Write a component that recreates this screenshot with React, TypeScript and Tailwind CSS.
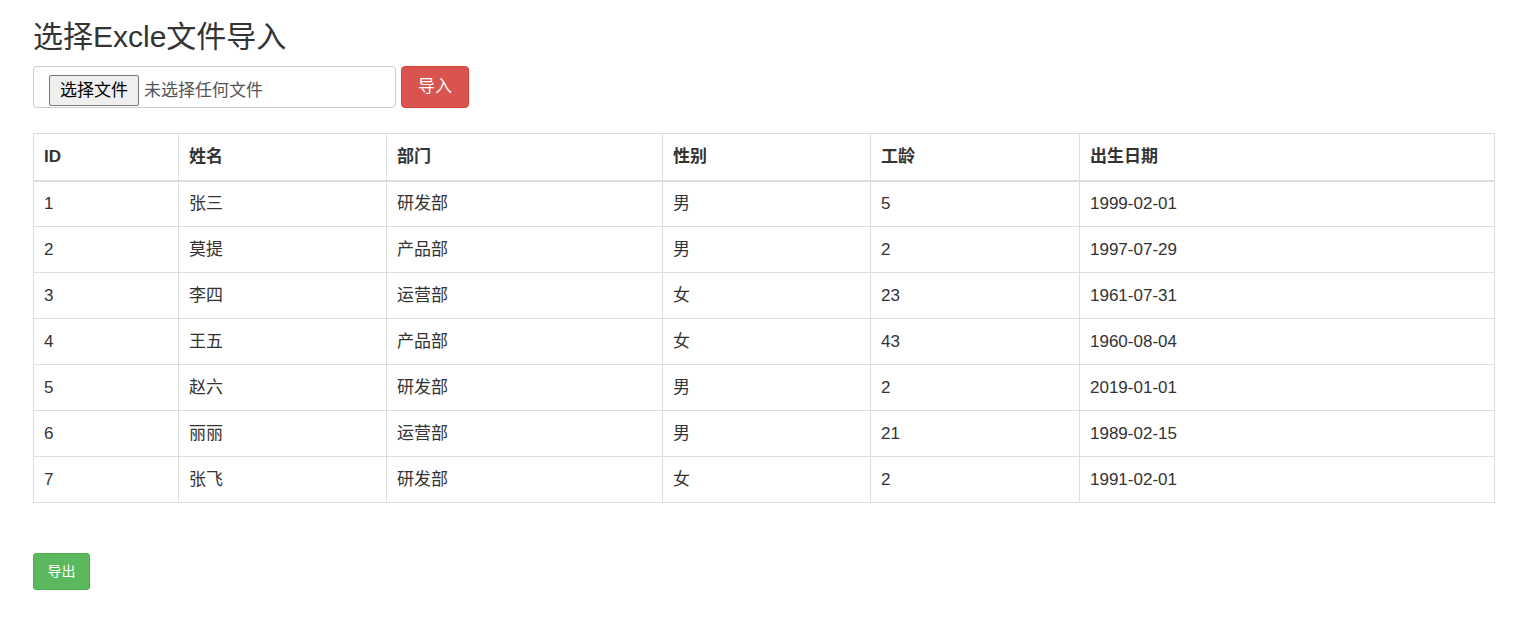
import React from 'react';

interface Employee {
  id: number;
  name: string;
  dept: string;
  gender: string;
  years: number;
  birth: string;
}

const employees: Employee[] = [
  { id: 1, name: '张三', dept: '研发部', gender: '男', years: 5, birth: '1999-02-01' },
  { id: 2, name: '莫提', dept: '产品部', gender: '男', years: 2, birth: '1997-07-29' },
  { id: 3, name: '李四', dept: '运营部', gender: '女', years: 23, birth: '1961-07-31' },
  { id: 4, name: '王五', dept: '产品部', gender: '女', years: 43, birth: '1960-08-04' },
  { id: 5, name: '赵六', dept: '研发部', gender: '男', years: 2, birth: '2019-01-01' },
  { id: 6, name: '丽丽', dept: '运营部', gender: '男', years: 21, birth: '1989-02-15' },
  { id: 7, name: '张飞', dept: '研发部', gender: '女', years: 2, birth: '1991-02-01' }
];

const columns = [
  { label: 'ID', width: 'w-[145px]' },
  { label: '姓名', width: 'w-[208px]' },
  { label: '部门', width: 'w-[276px]' },
  { label: '性别', width: 'w-[208px]' },
  { label: '工龄', width: 'w-[209px]' },
  { label: '出生日期', width: '' }
];

const font = "font-['Liberation_Sans','Noto_Sans_CJK_SC',sans-serif]";

const App: React.FC = () => {
  return <div className={`min-h-screen bg-white px-[33px] pt-[20px] text-[#333] ${font}`}>
      <h2 className="text-[30px] leading-[33px] font-normal">选择Excle文件导入</h2>

      <div className="mt-[13px] flex items-start gap-[5px]">
        <div className="flex h-[42px] w-[363px] items-start rounded-[4px] border border-[#ccc] pl-[15px] pt-[8px]">
          <span className="flex h-[31px] items-center rounded-[2px] border border-[#767676] bg-[#efefef] px-[10px] text-[17px] text-black">
            选择文件
          </span>
          <span className="ml-[5px] mt-[4px] text-[17px] leading-[24px] text-[#555]">未选择任何文件</span>
        </div>
        <button className="flex h-[42px] w-[68px] items-center justify-center rounded-[4px] border border-[#d43f3a] bg-[#d9534f] text-[17px] text-white">
          导入
        </button>
      </div>

      <table className="mt-[25px] w-[1462px] table-fixed border-collapse border border-[#ddd] text-[17px] leading-[24px]">
        <thead>
          <tr className="h-[47px]">
            {columns.map(c => <th key={c.label} className={`${c.width} border border-b-2 border-[#ddd] px-[10px] text-left font-bold`}>
                {c.label}
              </th>)}
          </tr>
        </thead>
        <tbody>
          {employees.map(e => <tr key={e.id} className="h-[46px]">
              <td className="border border-[#ddd] px-[10px]">{e.id}</td>
              <td className="border border-[#ddd] px-[10px]">{e.name}</td>
              <td className="border border-[#ddd] px-[10px]">{e.dept}</td>
              <td className="border border-[#ddd] px-[10px]">{e.gender}</td>
              <td className="border border-[#ddd] px-[10px]">{e.years}</td>
              <td className="border border-[#ddd] px-[10px]">{e.birth}</td>
            </tr>)}
        </tbody>
      </table>

      <button className="mt-[50px] flex h-[37px] w-[57px] items-center justify-center rounded-[3px] border border-[#4cae4c] bg-[#5cb85c] text-[14px] text-white">
        导出
      </button>
    </div>;
};

export default App;
